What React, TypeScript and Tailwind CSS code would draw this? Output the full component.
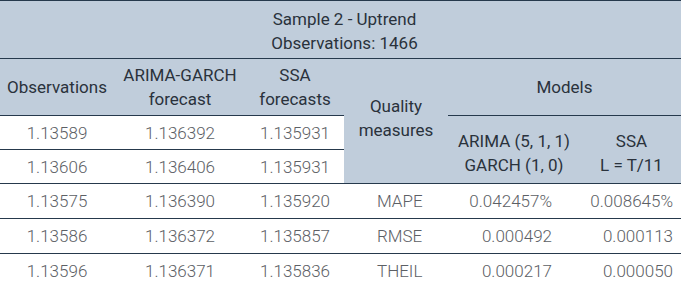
import React from "react";

const line = "border-[#26394c]";

export default function App() {
  const hd = "text-[#2a323c]";
  const num = "text-[#5c6065] font-light";
  const rows = [
    ["1.13575", "1.136390", "1.135920", "MAPE", "0.042457%", "0.008645%"],
    ["1.13586", "1.136372", "1.135857", "RMSE", "0.000492", "0.000113"],
    ["1.13596", "1.136371", "1.135836", "THEIL", "0.000217", "0.000050"],
  ];
  return (
    <div className="w-[681px] h-[288px] bg-white" style={{ fontFamily: "Roboto, 'Noto Sans', sans-serif" }}>
      <table className="w-[681px] border-collapse table-fixed text-[17px] leading-[24px]">
        <colgroup>
          <col className="w-[114px]" />
          <col className="w-[132px]" />
          <col className="w-[98px]" />
          <col className="w-[104px]" />
          <col className="w-[130px]" />
          <col className="w-[103px]" />
        </colgroup>
        <tbody>
          <tr className={`h-[58px] bg-[#c0cddb] border-t border-b ${line}`}>
            <td colSpan={6} className={`text-center ${hd} pl-[8px] pt-[2px]`}>
              <div>Sample 2 - Uptrend</div>
              <div>Observations: 1466</div>
            </td>
          </tr>
          <tr className={`h-[57px] bg-[#c0cddb]`}>
            <td className={`text-center ${hd} border-b ${line}`}>Observations</td>
            <td className={`text-center ${hd} border-b ${line}`}>
              <div>ARIMA-GARCH</div>
              <div>forecast</div>
            </td>
            <td className={`text-center ${hd} border-b ${line}`}>
              <div>SSA</div>
              <div>forecasts</div>
            </td>
            <td rowSpan={3} className={`text-center ${hd} pb-[6px] border-b ${line}`}>
              <div>Quality</div>
              <div>measures</div>
            </td>
            <td colSpan={2} className={`text-center ${hd} border-b ${line}`}>Models</td>
          </tr>
          <tr className="h-[34px]">
            <td className={`bg-white text-center ${num} border-b ${line}`}>1.13589</td>
            <td className={`bg-white text-center ${num} border-b ${line}`}>1.136392</td>
            <td className={`bg-white text-center ${num} border-b ${line}`}>1.135931</td>
            <td rowSpan={2} className={`bg-[#c0cddb] text-center ${hd} pt-[6px] pl-[2px] border-b ${line}`}>
              <div>ARIMA (5, 1, 1)</div>
              <div>GARCH (1, 0)</div>
            </td>
            <td rowSpan={2} className={`bg-[#c0cddb] text-center ${hd} pt-[6px] pl-[4px] border-b ${line}`}>
              <div>SSA</div>
              <div>L = T/11</div>
            </td>
          </tr>
          <tr className="h-[34px]">
            <td className={`bg-white text-center ${num} border-b ${line}`}>1.13606</td>
            <td className={`bg-white text-center ${num} border-b ${line}`}>1.136406</td>
            <td className={`bg-white text-center ${num} border-b ${line}`}>1.135931</td>
          </tr>
          {rows.map((r, i) => (
            <tr key={i} className={`h-[35px] bg-white border-b ${line}`}>
              <td className={`text-center ${num}`}>{r[0]}</td>
              <td className={`text-center ${num}`}>{r[1]}</td>
              <td className={`text-center ${num}`}>{r[2]}</td>
              <td className={`text-left pl-[33px] ${num}`}>{r[3]}</td>
              <td className={`text-right pr-[26px] ${num}`}>{r[4]}</td>
              <td className={`text-right pr-[8px] ${num}`}>{r[5]}</td>
            </tr>
          ))}
        </tbody>
      </table>
    </div>
  );
}
